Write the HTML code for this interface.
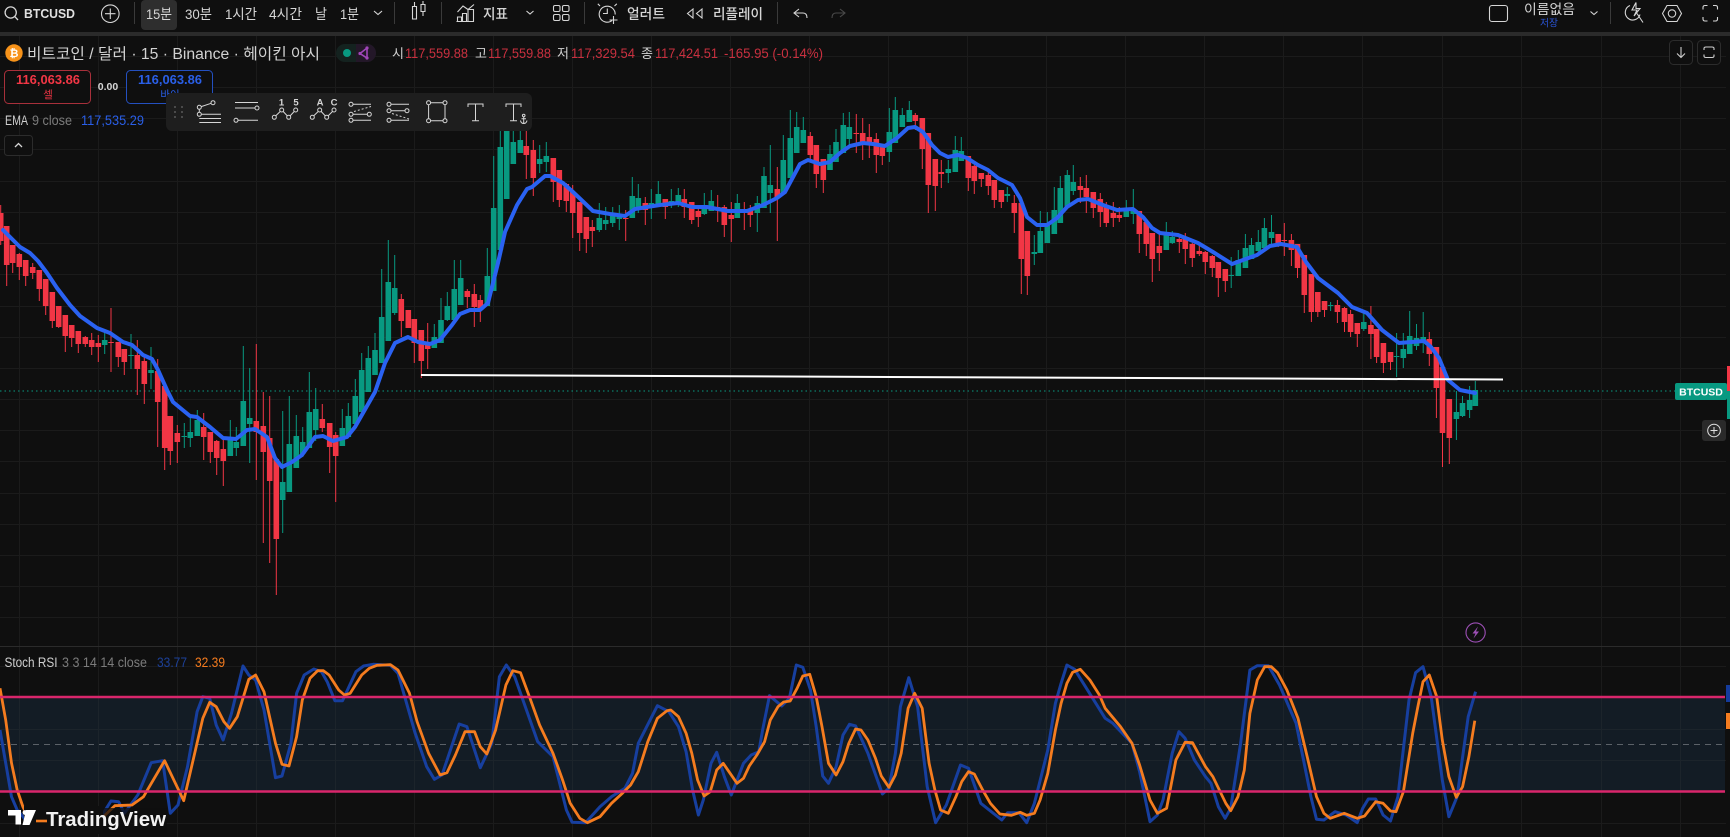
<!DOCTYPE html>
<html lang="ko"><head><meta charset="utf-8"><title>BTCUSD</title>
<style>
html,body{margin:0;padding:0;background:#0f0f0f;width:1730px;height:837px;overflow:hidden}
svg{display:block}
text{font-family:"Liberation Sans","Noto Sans CJK KR",sans-serif}
.k{font-family:"Liberation Sans","Noto Sans CJK KR",sans-serif;font-size:14px;fill:#d6d6d6}
.ic{fill:none;stroke:#d6d6d6;stroke-width:1.1}
.r{fill:#c9303f;font-size:13.5px}
</style></head><body>
<svg width="1730" height="837" viewBox="0 0 1730 837" xmlns="http://www.w3.org/2000/svg">
<rect width="1730" height="837" fill="#0f0f0f"/>
<!-- grid -->
<path stroke="#1b1b1b" stroke-width="1" fill="none" d="M19.5 36V837M98.5 36V837M177.5 36V837M256.5 36V837M335.5 36V837M414.5 36V837M493.5 36V837M572.5 36V837M651.5 36V837M730.5 36V837M809.5 36V837M888.5 36V837M967.5 36V837M1046.5 36V837M1125.5 36V837M1204.5 36V837M1283.5 36V837M1362.5 36V837M1442.5 36V837M1521.5 36V837M1601.5 36V837M1680.5 36V837
M0 56.5H1726M0 87.5H1726M0 118.5H1726M0 149.5H1726M0 181.5H1726M0 212.5H1726M0 243.5H1726M0 274.5H1726M0 306.5H1726M0 337.5H1726M0 368.5H1726M0 399.5H1726M0 430.5H1726M0 461.5H1726M0 493.5H1726M0 524.5H1726M0 555.5H1726M0 586.5H1726M0 617.5H1726
M0 666.5H1726M0 729.5H1726M0 760.5H1726M0 823.5H1726"/>
<path stroke="#2b2b2b" stroke-width="1" d="M0 646.5H1730"/>

<!-- price line -->
<path stroke="#089981" stroke-width="1" stroke-dasharray="1.5 3" d="M0 391H1676"/>

<!-- candles: red wicks -->
<path stroke="#f23645" stroke-width="1" fill="none" d="M.7 205V245M6.7 226V286M12.7 245V273M19.3 253V280M25.7 260V286M32.7 263V279M39.3 270V301M45.7 279V315M52.3 292V328M58.7 306V328M65.3 315V352M71.7 325V347M78.3 331V353M85.3 336V347M91.7 333V355M98.3 335V362M111 308V372M118.3 342V367M124.3 349V375M137.3 340V395M144.3 356V404M157.7 359V447M164.7 386V470M170.3 416V465M177.3 425V463M203.7 413V460M210.3 432V463M216.7 440V475M223.3 440V486M256.3 344V480M263.3 392V543M269.7 396V563M276.3 459V595M322.3 404V432M329.7 423V473M335.7 432V502M401.3 294V337M408.3 310V328M414.3 319V363M421.3 330V378M427.7 323V369M467.3 289V308M474.3 284V327M480.3 295V322
M526.3 131V179M533.3 140V196M553.3 158V202M559.3 170V207M566.3 183V212M572.7 185V238M579.7 202V251M586.3 217V253M592.3 220V247M625.7 210V241M645.3 197V225M665.3 199V219M684.3 189V218M691.7 202V224M698.3 205V227M717.7 195V222M724.3 205V237M731.3 202V242M744.3 202V230M750.3 205V227M777.3 167V241M810.3 132V160M816.3 145V188M823.3 160V193
M856.3 114V153M862.7 118V160M869.3 124V158M876.3 133V173M882.3 145V165M915.3 113V130M922.3 118V169M928.3 133V213M935.3 159V211M941.3 160V188M968.3 156V191M974.3 165V194M981.3 173V187M988.3 170V195M994.3 180V208M1001.3 190V208M1014.3 195V233M1021.3 203V294M1027.3 231V295M1080.3 177V203M1086.3 175V213M1093.3 192V218M1100.3 193V227M1106.3 202V227M1113.3 202V227M1119.3 207V222M1139.3 211V253M1146.3 222V256M1152.3 233V282M1159.3 233V271M1179.3 234V253M1185.3 233V264M1192.3 243V267M1199.3 246V256M1205.3 251V274M1212.3 255V277M1218.3 262V297M1225.3 269V292M1278.2 234V247M1284.3 223V256M1291.4 234V266M1297.5 244V278M1304.3 255V313M1311.4 274V322M1317.8 292V317M1324.5 301V317M1337.4 300V323M1344.5 307V332M1350.6 310V337M1357.3 323V347M1370.9 306V359M1376.6 329V363M1383.4 343V373M1390.5 352V370M1429.3 332V366M1436.4 347V418M1442.5 367V467M1449.3 399V464"/>
<!-- red bodies -->
<path stroke="#f23645" stroke-width="5.6" fill="none" d="M.7 213V241M6.7 226V265M12.7 245V263M19.3 254V267M25.7 260V276M32.7 267V273M39.3 270V289M45.7 279V306M52.3 292V321M58.7 306V327M65.3 315V336M71.7 325V338M78.3 331V344M85.3 337V344M91.7 340V347M98.3 343V347M111 342V343M118.3 342V357M124.3 349V362M137.3 355V369M144.3 361V384M157.7 371V402M164.7 386V448M170.3 416V451M177.3 433V442M203.7 427V437M210.3 432V452M216.7 441V458M223.3 449V461M256.3 421V432M263.3 426V452M269.7 438V481M276.3 459V539M322.3 419V428M329.7 423V447M335.7 435V456M401.3 299V321M408.3 310V328M414.3 319V343M421.3 330V361M427.7 345V349M467.3 291V297M474.3 294V307M480.3 300V310
M526.3 146V155M533.3 150V178M553.3 158V182M559.3 170V200M566.3 184V201M572.7 192V213M579.7 202V233M586.3 217V239M592.3 227V231M625.7 218V219M645.3 203V210M665.3 199V207M684.3 199V207M691.7 202V220M698.3 211V217M717.7 207V208M724.3 207V225M731.3 215V219M744.3 211V212M750.3 211V215M777.3 189V198M810.3 136V155M816.3 145V174M823.3 159V180
M856.3 133V134M862.7 133V143M869.3 137V142M876.3 139V155M882.3 146V156M915.3 115V121M922.3 118V149M928.3 133V185M935.3 159V186M941.3 172V174M968.3 156V178M974.3 166V181M981.3 173V179M988.3 175V186M994.3 180V200M1001.3 190V202M1014.3 203V213M1021.3 203V259M1027.3 231V276M1080.3 186V190M1086.3 188V197M1093.3 192V208M1100.3 199V212M1106.3 206V223M1113.3 213V218M1119.3 215V218M1139.3 211V234M1146.3 222V244M1152.3 233V259M1159.3 246V253M1179.3 239V242M1185.3 239V249M1192.3 244V258M1199.3 251V254M1205.3 252V262M1212.3 256V268M1218.3 262V278M1225.3 269V281M1278.2 234V246M1284.3 240V241M1291.4 240V250M1297.5 244V268M1304.3 255V295M1311.4 274V312M1317.8 292V312M1324.5 301V310M1337.4 305V312M1344.5 308V322M1350.6 314V332M1357.3 323V334M1370.9 325V334M1376.6 329V357M1383.4 343V363M1390.5 352V362M1429.3 339V354M1436.4 347V388M1442.5 367V433M1449.3 399V438"/>
<!-- green wicks -->
<path stroke="#089981" stroke-width="1" fill="none" d="M104.7 332V354M131 334V369M151 347V389M184.3 423V448M190.3 418V447M197.3 410V436M230.3 420V456M236.3 427V456M243.3 346V446M249.7 368V463M282.7 411V533M289.3 396V492M296.3 415V468M302.7 427V457M309.3 372V448M315.7 388V441M342.3 409V446M348.3 403V437M355.3 379V424M361.7 353V412M368.3 346V392M375 333V375M381.7 269V363M388.3 240V341M394.7 255V315M434.3 324V348M441 298V343M447.3 292V321M454.3 260V321M460.7 260V305M487.3 248V306M493.7 156V291M500.3 130V250M506.7 130V199M513.3 130V164M520.3 130V153
M539.7 145V173M546.3 142V172M599.3 203V232M605.7 207V230M612.7 207V227M619.3 205V230M632.3 177V218M638.3 184V213M651.3 189V219M658.3 181V207M671.3 189V208M678.3 188V207M704.3 193V215M711.3 190V211M737.3 194V218M757.3 196V232M764 167V208M770.3 145V213M783.3 135V194M790.3 110V178M796.7 112V153M803.3 117V143M830 145V170
M836 129V162M843.3 113V153M849.3 112V147M889.3 108V162M895.3 97V143M902.3 108V127M909.3 101V122M948.3 160V183M955.3 136V172M961.3 137V161M1007.3 187V202M1034.3 235V265M1040.3 211V253M1047.3 212V243M1054.3 187V234M1060.3 176V223M1067.3 170V207M1073.3 165V195M1126.3 200V217M1133.3 189V224M1166.3 222V250M1172.3 231V244M1231.2 257V288M1238.3 250V276M1245.4 234V268M1251.5 238V259M1258.3 230V252M1264.4 218V248M1271.5 215V247M1330.6 302V311M1363.8 313V331M1396.6 333V377M1403.3 333V368M1409.7 311V354M1416.5 324V350M1423.2 312V353M1456.4 391V440M1462.5 396V417M1469.6 386V418M1475.3 381V406"/>
<!-- green bodies -->
<path stroke="#089981" stroke-width="5.6" fill="none" d="M104.7 340V345M131 355V356M151 370V373M184.3 436V437M190.3 432V438M197.3 420V436M230.3 440V456M236.3 442V448M243.3 401V446M249.7 418V424M282.7 482V500M289.3 444V492M296.3 436V468M302.7 442V454M309.3 412V448M315.7 409V430M342.3 428V446M348.3 416V437M355.3 396V424M361.7 370V412M368.3 358V392M375 350V375M381.7 317V363M388.3 282V341M394.7 288V313M434.3 337V348M441 320V343M447.3 306V320M454.3 289V320M460.7 278V305M487.3 276V306M493.7 208V291M500.3 147V250M506.7 130V199M513.3 142V164M520.3 140V153
M539.7 159V164M546.3 156V162M599.3 218V230M605.7 220V224M612.7 213V223M619.3 214V219M632.3 196V218M638.3 198V208M651.3 203V207M658.3 194V205M671.3 201V204M678.3 195V203M704.3 207V214M711.3 201V211M737.3 203V218M757.3 203V213M764 176V208M770.3 185V193M783.3 160V194M790.3 138V178M796.7 127V153M803.3 130V143M830 154V170
M836 142V162M843.3 125V153M849.3 127V139M889.3 132V152M895.3 110V143M902.3 115V127M909.3 110V122M948.3 169V173M955.3 150V172M961.3 151V161M1007.3 194V196M1034.3 252V254M1040.3 231V253M1047.3 225V243M1054.3 210V234M1060.3 188V223M1067.3 175V207M1073.3 182V191M1126.3 211V217M1133.3 209V214M1166.3 233V250M1172.3 237V243M1231.2 275V276M1238.3 260V276M1245.4 248V268M1251.5 245V259M1258.3 242V251M1264.4 228V248M1271.5 232V238M1330.6 305V306M1363.8 322V329M1396.6 356V357M1403.3 349V358M1409.7 336V354M1416.5 338V346M1423.2 337V342M1456.4 412V419M1462.5 403V416M1469.6 400V410M1475.3 390V406"/>

<!-- EMA -->
<polyline fill="none" stroke="#2a62f2" stroke-width="4" stroke-linejoin="round" stroke-linecap="round" points="3,230 10,237 20,247 30,253 38,261 47,273 57,288 70,305 80,316 97,328 110,333 123,342 132,345 143,355 152,359 158,370 167,390 173,402 190,416 197,417 210,427 223,438 236,439 247,430 255,429 267,437 275,458 282,467 292,462 302,455 315,437 323,436 333,441 347,437 355,427 375,392 385,363 395,343 408,337 418,342 430,344 440,340 452,325 460,314 470,310 480,310 488,303 498,263 505,232 517,205 527,189 532,187 545,176 550,176 563,183 573,192 593,211 610,214 625,216 635,209 647,207 660,205 678,203 692,207 707,207 728,211 747,211 763,205 777,198 785,192 800,164 808,160 820,164 830,162 840,153 850,146 863,143 873,144 885,146 897,138 908,128 915,127 923,132 932,145 940,153 948,157 958,155 967,158 978,165 988,170 998,178 1012,185 1020,198 1027,217 1037,225 1047,225 1057,218 1067,207 1078,200 1088,199 1103,205 1117,210 1133,209 1143,217 1152,228 1160,233 1178,235 1198,243 1213,252 1232,264 1243,260 1257,255 1270,246 1281,244 1297,247 1306,262 1318,278 1338,293 1352,307 1367,313 1382,330 1399,343 1424,341 1431,347 1439,358 1448,380 1460,390 1475,393"/>
<!-- white trend -->
<path stroke="#fff" stroke-width="2" d="M421 375L1503 379.5"/>

<!-- RSI pane -->
<rect x="0" y="697" width="1725" height="94.5" fill="#131c25"/>
<path stroke="#1c242b" stroke-width="1" d="M0 729.5H1725M0 760.5H1725M19.5 697V791M98.5 697V791M177.5 697V791M256.5 697V791M335.5 697V791M414.5 697V791M493.5 697V791M572.5 697V791M651.5 697V791M730.5 697V791M809.5 697V791M888.5 697V791M967.5 697V791M1046.5 697V791M1125.5 697V791M1204.5 697V791M1283.5 697V791M1362.5 697V791M1442.5 697V791M1521.5 697V791M1601.5 697V791M1680.5 697V791"/>
<path stroke="#5b6168" stroke-width="1" stroke-dasharray="6 5" d="M0 744.5H1725"/>

<polyline fill="none" stroke="#173f9f" stroke-width="3" stroke-linejoin="round" points="0,730 11.5,796.7 17.2,810 23,816.7 30,826 47,826 103.3,813.3 111,801 118.6,801.7 124.4,813.3 137.8,795 151.2,762.7 162.6,760.7 170.3,813.3 178,805 187.5,766.7 197.1,711.7 202.8,696.7 209.7,698.3 216.2,725 223.1,740 231.5,713.3 243,666 248.8,675 255.6,680 264,710 275.5,777.7 282,776 290.9,743.3 296.6,693.3 304.2,675 313.8,669 321.5,671.7 327.2,681.7 334.9,700.7 342.5,700.7 355.9,671.7 363.6,666 373.1,664.3 390.4,665.3 398,673.3 415.2,733.3 426.7,766.7 434.4,779.3 442,775 459.2,724 466.9,726.7 480.3,767.7 491.8,743.3 499.4,676.7 506.3,665 514.7,676.7 537.7,741.7 553,756.7 566.4,810 572.1,822.3 585.5,822.7 600,806.7 611.5,796.7 624.9,788.3 632.5,773.3 638.3,743.3 645.9,728.3 657.4,705.7 668.9,711.7 678.5,726.7 686.1,751.7 692.6,790 698.4,815 703.3,800 711,763.3 716.7,752.3 724.4,776.7 731.3,795 743.5,763.3 751.2,755 758.8,751.7 762.6,730 769.5,695.7 781.8,706 789.4,698.3 796.3,665 802.8,667.3 810.5,690 816.2,726.7 822.7,776 828.5,783.3 836.1,766.7 843,735 849.5,724.3 855.6,726 867.9,753.3 882.4,794 888.9,788.3 895.4,753.3 900.4,706.7 908.8,677.7 917.6,706.7 927.2,786.7 935.6,822.7 946.3,805 954,783.3 960.5,765 968.5,768.3 980.8,803.3 1001.8,820 1007.6,812.7 1019,812.7 1026.7,822.7 1034.4,803.3 1047.8,750 1055.4,703.3 1061.1,683.3 1066.9,665 1074.6,669.3 1105.2,718.3 1112.8,723.3 1132,743.3 1139.6,771.7 1150,821.7 1157.4,815 1163,800 1172.2,753.3 1178.9,731.7 1185.1,738.3 1194.4,760 1205.5,776.7 1211,783.3 1218.4,806.7 1225.1,818.3 1230.7,808.3 1240.6,743.3 1249.9,670 1257.3,665.7 1268.4,665.7 1279.5,685 1296.1,723.3 1310.9,796.7 1316.5,819.3 1323.9,820 1335,811.7 1346.1,815 1357.2,822.7 1362.7,808.3 1368.3,799 1375.7,799 1383.1,815 1390.5,821 1397.9,796.7 1409,700 1415.6,672.7 1423,666.7 1431.2,696.7 1442.3,780 1448.9,816.7 1457.1,796.7 1468.2,716.7 1475.6,691.7"/>
<polyline fill="none" stroke="#f57c1f" stroke-width="2.8" stroke-linejoin="round" points="0,688.3 5.7,720 11.5,763 17.2,790 23,807 30,821 47,821 103.3,816.7 114.8,805.7 132,805 143.5,796.7 164.6,760.7 183.7,800.7 202.8,718.3 209.7,702.3 216.2,706.7 223.9,721.7 229.6,728.3 237.3,716.7 248.8,679.3 255.6,675 264,691.7 275.5,743.3 282,764.3 289,766 296.6,736.7 302.3,700 310,678.3 317.6,670.7 323.4,670.7 329.1,675 338.7,690 344.4,695 350.2,693.3 361.7,675 369.3,668.3 377,665.3 390.4,664.7 398,670 409.5,693.3 417.1,721.7 428.6,753.3 440.1,775 447,772.7 455.4,755 465,731.7 474.6,731.7 480.3,746.7 486.8,754 495.6,730 505.9,685 512.8,670.7 520.5,672.7 530,698.3 539.6,725 553,753.3 562.6,780 570.2,803.3 579.8,818.3 587.4,822.7 600,816.7 611.5,803.3 623,792.7 630.6,785 638.3,771.7 647.8,741.7 657.4,718.3 667,710.7 670.8,710 678.5,716.7 686.1,733.3 691.8,753.3 697.6,780 704.1,796 710.2,791.7 716.7,770 723.2,763.3 737,783.3 743.5,778.3 749.3,766 756.9,755 764.6,741.7 770.3,720 778,706.7 783.7,702 790.2,701 797.1,688.3 802.8,676 809.7,674.3 816.2,696.7 822,726.7 828.5,763.3 836.1,775 843,761.7 848.8,743.3 855.6,729 861,730 867.9,740 875.5,758.3 881.3,776 888.9,787.3 895.4,775 901.2,753.3 908.1,708.3 914.6,693.3 922.2,708.3 929.1,763.3 934.9,790 940.6,810 948.3,813.3 955.9,796.7 961.7,781.7 968.5,771.7 974.3,774 982.7,790 990.4,803.3 999.9,814 1011.4,815.3 1020.2,812.3 1026.7,815.3 1034.4,813.3 1040.1,800 1047.8,773.3 1055.4,730 1061.1,703.3 1066.9,683.3 1072.6,672.3 1080.3,669.3 1089.9,680 1099.4,695 1105.2,708.3 1120.5,726.7 1132,743.3 1139.6,765 1150,800 1157.4,813.3 1166.6,808.3 1175.9,760 1185.1,742.3 1192.5,742.7 1205.5,766.7 1212.9,776.7 1225.8,803.3 1230.7,810.7 1238,796.7 1244.3,770 1249.9,713.3 1257.3,680 1264.7,666.7 1271.3,666.7 1277.6,672.7 1286.9,690 1298,718.3 1307.2,756.7 1316.5,796.7 1323.9,813.3 1330.2,818.3 1344.2,813.3 1357.2,818.3 1364.6,816 1375.7,801.7 1383.1,803.3 1390.5,811 1396,811.7 1403.4,791.7 1412.7,733.3 1418.2,705 1423,681.7 1429.3,675 1436.7,696.7 1442.3,740 1448.9,776.7 1456.3,797.3 1462.6,786.7 1468.9,756.7 1474.8,720.7"/>
<path stroke="#d9266b" stroke-width="2.4" d="M0 697H1725M0 791.5H1725"/>
<rect x="1726" y="685" width="4" height="17" fill="#143b9c"/><rect x="1726" y="713" width="4" height="16" fill="#f57c1f"/>

<!-- TV logo -->
<rect x="24" y="806" width="79" height="28" fill="#0f0f0f"/>
<rect x="103" y="808" width="64" height="25" fill="#0f0f0f" fill-opacity=".75"/>
<path fill="#fff" d="M8 810H21V824.5H15.5V815.5H8ZM26 810H36L29.5 825H22.5Z"/><circle cx="25" cy="812.5" r="2.4" fill="#fff"/>
<path stroke="#f57c1f" stroke-width="2.6" d="M36 821H47"/>
<text x="46" y="826" font-size="20" font-weight="700" fill="#f2f2f2" textLength="120" lengthAdjust="spacingAndGlyphs">TradingView</text>

<!-- Stoch legend -->
<text x="4.5" y="667" font-size="13.5" fill="#cfcfcf" textLength="53" lengthAdjust="spacingAndGlyphs">Stoch RSI</text>
<text x="62" y="667" font-size="13.5" fill="#7c7c7c" textLength="85" lengthAdjust="spacingAndGlyphs">3 3 14 14 close</text>
<text x="157" y="667" font-size="13.5" fill="#1c4098" textLength="30" lengthAdjust="spacingAndGlyphs">33.77</text>
<text x="195" y="667" font-size="13.5" fill="#f57c1f" textLength="30" lengthAdjust="spacingAndGlyphs">32.39</text>

<!-- lightning -->
<circle cx="1475.6" cy="632.5" r="9.6" fill="none" stroke="#9c4fb5" stroke-width="1.1"/>
<path d="M1478 626.5L1472.5 633.5H1475.5L1473.5 638.5L1479 631.5H1476Z" fill="#9c4fb5"/>

<!-- header bars -->
<rect x="0" y="0" width="1730" height="32" fill="#0f0f0f"/>
<rect x="0" y="32" width="1730" height="4" fill="#2b2b2b"/>
<rect x="141" y="0" width="36" height="30" rx="4" fill="#2e2e2e"/>

<!-- top left -->
<circle cx="10.7" cy="12.5" r="5.6" class="ic" style="stroke-width:1.3"/><path d="M14.8 16.6L18 20" class="ic" style="stroke-width:1.3"/>
<text x="24" y="18" font-size="13" font-weight="700" fill="#e0e0e0" textLength="51" lengthAdjust="spacingAndGlyphs">BTCUSD</text>
<circle cx="110.3" cy="13.7" r="8.8" class="ic"/><path d="M110.3 8.5V19M105 13.7H115.5" class="ic"/>
<path d="M134.5 2V24" stroke="#3a3a3a"/>
<text x="146" y="19" class="k" textLength="26" lengthAdjust="spacingAndGlyphs">15분</text>
<text x="185" y="19" class="k" textLength="27" lengthAdjust="spacingAndGlyphs">30분</text>
<text x="225" y="19" class="k" textLength="32" lengthAdjust="spacingAndGlyphs">1시간</text>
<text x="269" y="19" class="k" textLength="33" lengthAdjust="spacingAndGlyphs">4시간</text>
<text x="315" y="19" class="k" textLength="12" lengthAdjust="spacingAndGlyphs">날</text>
<text x="340" y="19" class="k" textLength="19" lengthAdjust="spacingAndGlyphs">1분</text>
<path d="M374 11L378 14.5L382 11" class="ic"/>
<path d="M394.5 2V24" stroke="#3a3a3a"/>
<path d="M412.5 6.5H416.5V19H412.5ZM414.5 2V6.5M421 4.5H425V11.5H421ZM423 1V4.5M423 11.5V16" class="ic"/>
<path d="M441.5 2V24" stroke="#3a3a3a"/>
<path d="M457.5 21.5V17H461.5V21.5ZM462.5 21.5V13.5H466.5V21.5ZM468 21.5V9.5H473.5V21.5ZM456.5 21.5H474M457.5 12L463 6L468 9.5L474 4.5" class="ic"/>
<text x="483" y="19" class="k" font-weight="500" textLength="25" lengthAdjust="spacingAndGlyphs">지표</text>
<path d="M526.5 11L530 14L533.5 11" class="ic"/>
<rect x="553.5" y="5.5" width="6.5" height="6" rx="1.5" class="ic"/><rect x="562.5" y="5.5" width="6.5" height="6" rx="1.5" class="ic"/><rect x="553.5" y="14.5" width="6.5" height="6" rx="1.5" class="ic"/><rect x="562.5" y="14.5" width="6.5" height="6" rx="1.5" class="ic"/>
<path d="M584.5 2V24" stroke="#3a3a3a"/>
<path d="M612 20.6A8 8 0 1 1 615.2 14.5M607.3 8.5V13.5H603M600 6L597.8 3.8M614.5 6L616.8 3.8M613.5 16V24M609.5 20H617.5" class="ic"/>
<text x="627" y="19" class="k" font-weight="500" textLength="38" lengthAdjust="spacingAndGlyphs">얼러트</text>
<path d="M693 9L687.5 13.5L693 18ZM702 9L696.5 13.5L702 18Z" class="ic"/>
<text x="713" y="19" class="k" font-weight="500" textLength="50" lengthAdjust="spacingAndGlyphs">리플레이</text>
<path d="M777.5 2V24" stroke="#3a3a3a"/>
<path d="M799 9L794 13L799 17M794 13H803C806 13 807 15 807 18" class="ic"/>
<path d="M840 9L845 13L840 17M845 13H836C833 13 832 15 832 18" class="ic" style="stroke:#4a4a4a"/>

<!-- top right -->
<rect x="1489.5" y="5.5" width="18" height="16" rx="2.5" class="ic"/>
<text x="1524" y="14" font-size="13.5" fill="#d6d6d6" textLength="51" lengthAdjust="spacingAndGlyphs">이름없음</text>
<text x="1540" y="26.5" font-size="10" fill="#2a55d8" textLength="18" lengthAdjust="spacingAndGlyphs">저장</text>
<path d="M1590.5 11.5L1594 14.5L1597.5 11.5" class="ic"/>
<path d="M1610.5 2V24" stroke="#3a3a3a"/>
<path d="M1630 5.5A7.5 7.5 0 1 0 1640 14.5M1637 13.5L1643 22.5M1636 2.5L1632 10H1637L1634 16L1640 8.5H1636Z" class="ic"/>
<path d="M1662.5 13.5L1667 5.5H1677L1681.5 13.5L1677 21.5H1667Z" class="ic"/><circle cx="1672" cy="13.5" r="3.7" class="ic"/>
<path d="M1703 9.5V7.5Q1703 5.5 1705 5.5H1707.5M1713 5.5H1715.5Q1717.5 5.5 1717.5 7.5V9.5M1717.5 17V19Q1717.5 21 1715.5 21H1713M1707.5 21H1705Q1703 21 1703 19V17" class="ic"/>
<rect x="1669.5" y="40.5" width="23" height="24" rx="4" fill="#0f0f0f" stroke="#2c2c2c"/>
<rect x="1697.5" y="40.5" width="23" height="24" rx="4" fill="#0f0f0f" stroke="#2c2c2c"/>
<path d="M1681 47V57.5M1677 53.5L1681 57.5L1685 53.5" class="ic" style="stroke:#cfcfcf"/>
<path d="M1704 50V48.5Q1704 47 1706 47H1712Q1714 47 1714 48.5V50M1704 54.5V56Q1704 57.5 1706 57.5H1712Q1714 57.5 1714 56V54.5" class="ic" style="stroke:#cfcfcf"/>

<!-- legend -->
<circle cx="14" cy="53" r="8.7" fill="#f7931a"/>
<text x="14" y="57" font-size="11" font-weight="700" fill="#fff" text-anchor="middle">₿</text>
<text x="27" y="59" font-size="15.5" fill="#d2d2d2" textLength="293" lengthAdjust="spacingAndGlyphs">비트코인 / 달러 · 15 · Binance · 헤이킨 아시</text>
<rect x="336" y="44" width="40" height="18" rx="9" fill="#14221f"/>
<path d="M356 44H367A9 9 0 0 1 367 62H356Z" fill="#231728"/>
<circle cx="347" cy="53" r="4" fill="#089981"/>
<path d="M367 48L360 53.5L367 58Z" fill="none" stroke="#a046b8" stroke-width="1.6"/><circle cx="367" cy="48" r="1.6" fill="#a046b8"/><circle cx="367" cy="58" r="1.6" fill="#a046b8"/><circle cx="360" cy="53.5" r="1.6" fill="#a046b8"/>
<text x="392" y="58" font-size="13" fill="#d2d2d2">시</text><text x="405" y="58" class="r" textLength="63" lengthAdjust="spacingAndGlyphs">117,559.88</text>
<text x="475" y="58" font-size="13" fill="#d2d2d2">고</text><text x="488" y="58" class="r" textLength="63" lengthAdjust="spacingAndGlyphs">117,559.88</text>
<text x="557" y="58" font-size="13" fill="#d2d2d2">저</text><text x="571" y="58" class="r" textLength="64" lengthAdjust="spacingAndGlyphs">117,329.54</text>
<text x="641" y="58" font-size="13" fill="#d2d2d2">종</text><text x="655" y="58" class="r" textLength="63" lengthAdjust="spacingAndGlyphs">117,424.51</text>
<text x="724" y="58" class="r" textLength="99" lengthAdjust="spacingAndGlyphs">-165.95 (-0.14%)</text>

<!-- buy/sell -->
<rect x="4.5" y="70.5" width="86" height="33" rx="4" fill="#0f0f0f" stroke="#a8303b"/>
<text x="16" y="84" font-size="13" font-weight="700" fill="#f23645" textLength="64" lengthAdjust="spacingAndGlyphs">116,063.86</text>
<text x="48" y="98" font-size="10.5" fill="#f23645" text-anchor="middle">셀</text>
<text x="108" y="90" font-size="10.5" font-weight="700" fill="#d6d6d6" text-anchor="middle">0.00</text>
<rect x="126.5" y="70.5" width="86" height="33" rx="4" fill="#0f0f0f" stroke="#2450c0"/>
<text x="138" y="84" font-size="13" font-weight="700" fill="#2a5fe8" textLength="64" lengthAdjust="spacingAndGlyphs">116,063.86</text>
<text x="170" y="98" font-size="10.5" fill="#2a5fe8" text-anchor="middle">바이</text>

<!-- EMA legend -->
<text x="5" y="125" font-size="13.5" fill="#cfcfcf" textLength="23" lengthAdjust="spacingAndGlyphs">EMA</text>
<text x="32" y="125" font-size="13.5" fill="#7c7c7c" textLength="40" lengthAdjust="spacingAndGlyphs">9 close</text>
<text x="81" y="125" font-size="13.5" fill="#2a5fe8" textLength="63" lengthAdjust="spacingAndGlyphs">117,535.29</text>
<rect x="4.5" y="135.5" width="28" height="20" rx="3" fill="#0f0f0f" stroke="#2c2c2c"/>
<path d="M15 147L18.5 143.5L22 147" fill="none" stroke="#d6d6d6" stroke-width="1.3"/>

<!-- drawing toolbar -->
<rect x="166" y="93" width="366" height="38" rx="6" fill="#1e1e1e"/>
<path fill="#4a4a4a" d="M174 106h2v2h-2zM181 106h2v2h-2zM174 111h2v2h-2zM181 111h2v2h-2zM174 116h2v2h-2zM181 116h2v2h-2z"/>
<g fill="none" stroke="#d6d6d6" stroke-width="1">
<circle cx="213" cy="102.7" r="2"/><circle cx="199.3" cy="107.3" r="2"/><circle cx="199.3" cy="114.3" r="2"/>
<path d="M201.2 106.6L211.1 103.3M199.3 109.3V112.3M201.5 114.3H221M199.3 118.5H221M199.3 122.5H221"/>
<path d="M235 102.5H258M235 108H255M238 120.3H258"/><circle cx="257" cy="108" r="2"/><circle cx="236" cy="120.3" r="2"/>
<circle cx="274.3" cy="117.3" r="2"/><circle cx="281.7" cy="110" r="2"/><circle cx="288.7" cy="117.3" r="2"/><circle cx="295.7" cy="110" r="2"/>
<path d="M275.7 115.9L280.3 111.4M283.1 111.4L287.3 115.9M290.1 115.9L294.3 111.4"/>
<circle cx="312.3" cy="117.3" r="2"/><circle cx="319.7" cy="110" r="2"/><circle cx="326.7" cy="117.3" r="2"/><circle cx="334" cy="110" r="2"/>
<path d="M313.7 115.9L318.3 111.4M321.1 111.4L325.3 115.9M328.1 115.9L332.6 111.4"/>
<circle cx="351" cy="104.3" r="2"/><circle cx="351" cy="114.3" r="2"/><circle cx="369.3" cy="114.3" r="2"/><circle cx="351" cy="120.3" r="2"/>
<path d="M353 104.3H371M353 114.3H367.3M353 120.3H371"/><path d="M354 111.5L371 106.5" stroke-dasharray="2 2"/>
<circle cx="389" cy="104.3" r="2"/><circle cx="389" cy="110.7" r="2"/><circle cx="407" cy="110.7" r="2"/><circle cx="389" cy="120.3" r="2"/>
<path d="M391 104.3H409M391 110.7H405M391 120.3H409"/><path d="M392 113.5L409 119" stroke-dasharray="2 2"/>
<path d="M430.6 102.7H443M428.6 104.7V118.7M445 104.7V118.7M430.6 120.7H443"/>
<circle cx="428.6" cy="102.7" r="2"/><circle cx="445" cy="102.7" r="2"/><circle cx="428.6" cy="120.7" r="2"/><circle cx="445" cy="120.7" r="2"/>
<path d="M468 107V104H483V107M475.5 104V120.7M472 120.7H479"/>
<path d="M506 107V104H521V107M513.5 104V120.7M510 120.7H517"/>
<circle cx="523.7" cy="115.5" r="1.3"/><path d="M523.7 117V123.5M521.5 118.8H526M520.5 120.5Q521 123.5 523.7 123.5Q526.4 123.5 527 120.5"/>
</g>
<text x="281.5" y="105.5" font-size="9.5" font-weight="700" fill="#d6d6d6" text-anchor="middle">1</text>
<text x="296" y="105.5" font-size="9.5" font-weight="700" fill="#d6d6d6" text-anchor="middle">5</text>
<text x="320" y="105.5" font-size="9.5" font-weight="700" fill="#d6d6d6" text-anchor="middle">A</text>
<text x="334" y="105.5" font-size="9.5" font-weight="700" fill="#d6d6d6" text-anchor="middle">C</text>

<!-- right axis -->
<rect x="1727" y="366" width="3" height="25" fill="#f23645"/>
<rect x="1727" y="391" width="3" height="28" fill="#089981"/>
<rect x="1675" y="383" width="52" height="17" rx="2" fill="#089981"/>
<text x="1701" y="395.5" font-size="10.5" font-weight="700" fill="#fff" text-anchor="middle">BTCUSD</text>
<rect x="1702" y="420" width="24" height="21" rx="3" fill="#2a2a2a"/>
<circle cx="1714" cy="430.5" r="6.3" fill="none" stroke="#e0e0e0"/><path d="M1714 427V434M1710.5 430.5H1717.5" stroke="#e0e0e0"/>
</svg>
</body></html>
